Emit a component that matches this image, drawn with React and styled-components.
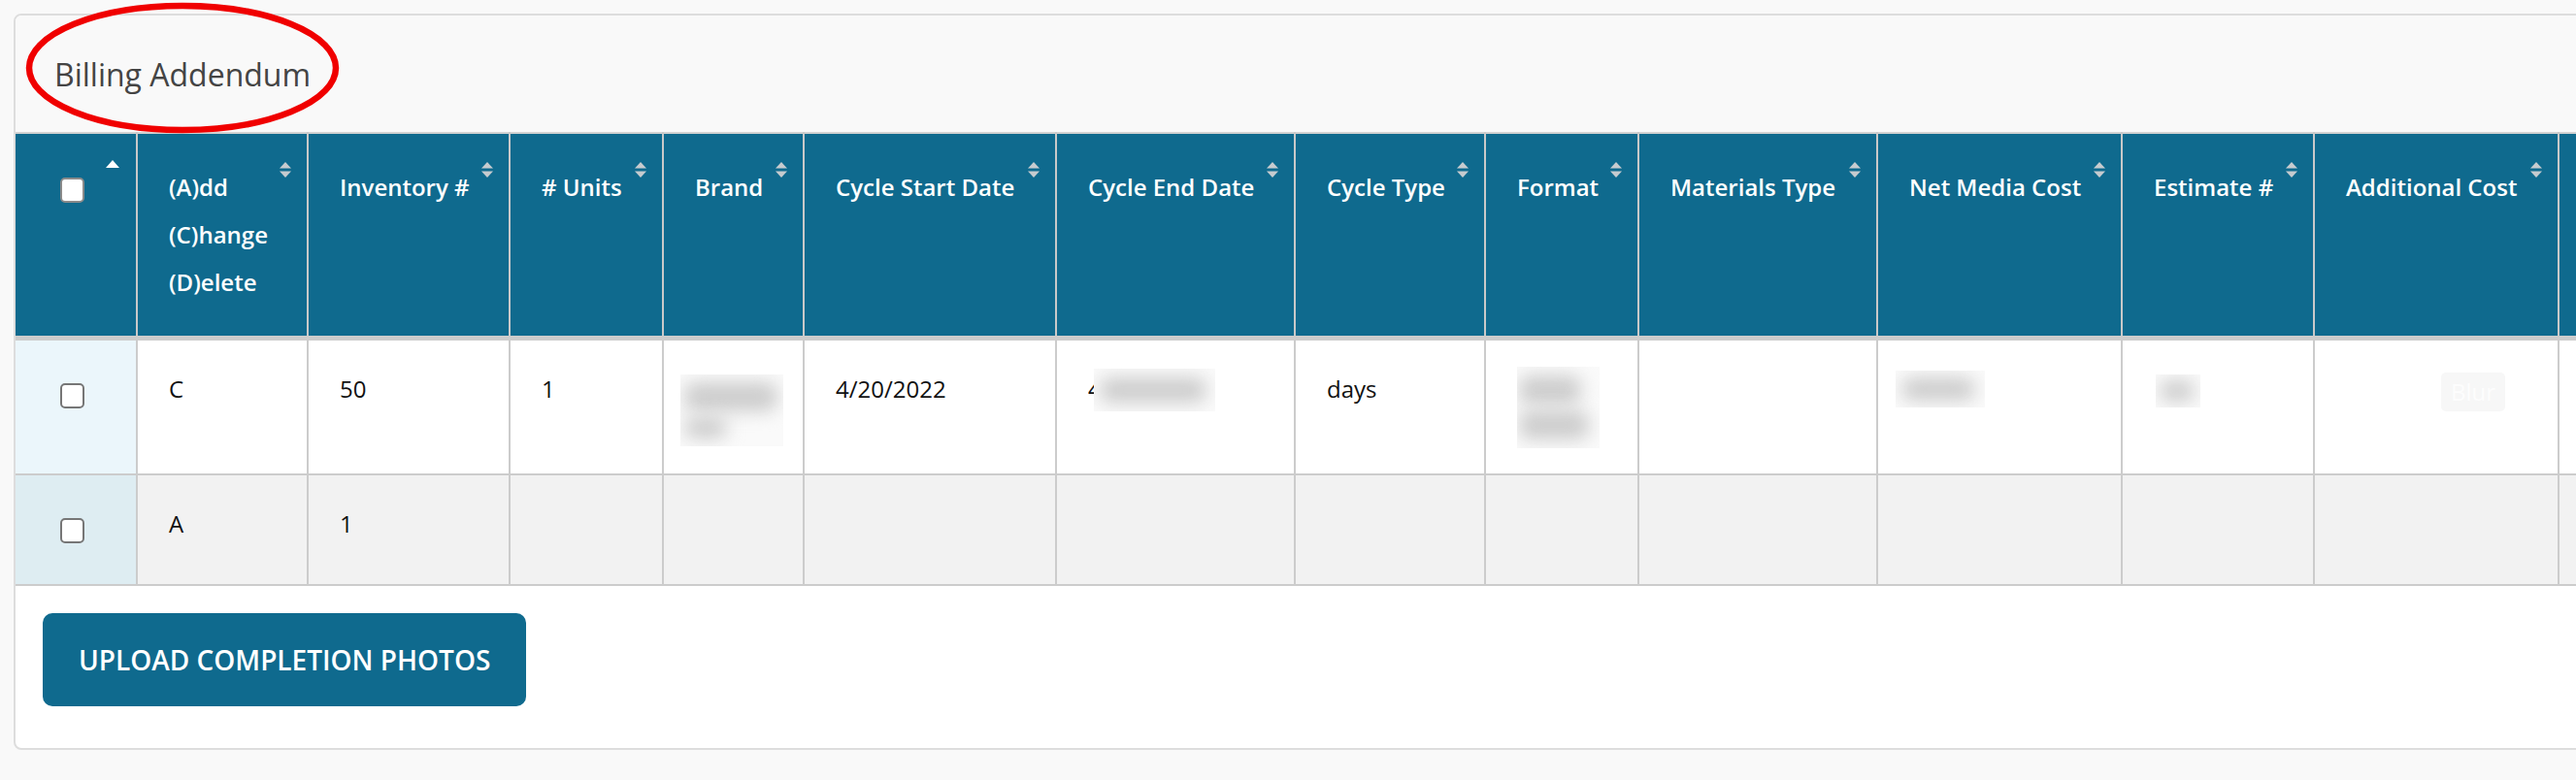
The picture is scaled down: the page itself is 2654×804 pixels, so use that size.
import React from 'react';
import styled, { createGlobalStyle } from 'styled-components';

const GlobalStyle = createGlobalStyle`
  html, body {
    margin: 0;
    background: #f9f9f9;
    overflow: hidden;
  }
  body {
    font-family: "Open Sans", "Noto Sans", sans-serif;
  }
`;

const columns = [
  { w: 125, label: null, sort: 'asc' },
  { w: 176, label: ['(A)dd', '(C)hange', '(D)elete'] },
  { w: 208, label: 'Inventory #' },
  { w: 158, label: '# Units' },
  { w: 145, label: 'Brand' },
  { w: 260, label: 'Cycle Start Date' },
  { w: 246, label: 'Cycle End Date' },
  { w: 196, label: 'Cycle Type' },
  { w: 158, label: 'Format' },
  { w: 246, label: 'Materials Type' },
  { w: 252, label: 'Net Media Cost' },
  { w: 198, label: 'Estimate #' },
  { w: 252, label: 'Additional Cost' },
  { w: 220, label: '', sort: 'none' },
];

const SortIcon = ({ dir }) =>
  dir === 'asc' ? (
    <SortMark $top={26} width="16" height="10" viewBox="0 0 16 10">
      <polygon points="8,1 15,9 1,9" fill="#ffffff" />
    </SortMark>
  ) : (
    <SortMark $top={29} width="12" height="16" viewBox="0 0 12 16">
      <polygon points="6,0 12,6.5 0,6.5" fill="#c6cbcf" />
      <polygon points="0,9.5 12,9.5 6,16" fill="#c6cbcf" />
    </SortMark>
  );

const App = () => {
  return (
    <Page>
      <GlobalStyle />
      <Card>
        <CardHeader>
          <Title>Billing Addendum</Title>
        </CardHeader>
        <Table style={{ width: columns.reduce((s, c) => s + c.w, 0) }}>
          <colgroup>
            {columns.map((c, i) => (
              <col key={i} style={{ width: c.w }} />
            ))}
          </colgroup>
          <thead>
            <tr>
              {columns.map((c, i) => (
                <Th key={i} $first={i === 0}>
                  {i === 0 ? (
                    <Check $header type="checkbox" readOnly />
                  ) : Array.isArray(c.label) ? (
                    c.label.map((l) => <div key={l}>{l}</div>)
                  ) : (
                    c.label
                  )}
                  {c.sort !== 'none' && <SortIcon dir={c.sort} />}
                </Th>
              ))}
            </tr>
          </thead>
          <tbody>
            <Row $h={140}>
              <SelectCell $bg="#ebf6fb">
                <Check type="checkbox" readOnly />
              </SelectCell>
              <Td>C</Td>
              <Td>50</Td>
              <Td>1</Td>
              <Td>
                <Blurred $w={106} $h={74} $mx={-15} $my={3} $pad={4}>
                  <Blob $w={96} $h={30} />
                  <Blob $w={44} $h={22} />
                </Blurred>
              </Td>
              <Td>4/20/2022</Td>
              <Td>
                <Nowrap>
                  4
                  <Blurred $w={125} $h={44} $mx={-8} $my={-3} $pad={6}>
                    <Blob $w={110} $h={26} />
                  </Blurred>
                </Nowrap>
              </Td>
              <Td>days</Td>
              <Td>
                <Blurred $w={85} $h={84} $mx={0} $my={-5} $pad={2}>
                  <Blob $w={64} $h={30} />
                  <Blob $w={72} $h={30} />
                </Blurred>
              </Td>
              <Td />
              <Td>
                <Blurred $w={92} $h={38} $mx={-14} $my={-1} $pad={6}>
                  <Blob $w={76} $h={24} />
                </Blurred>
              </Td>
              <Td>
                <Blurred $w={46} $h={34} $mx={2} $my={3} $pad={4}>
                  <Blob $w={36} $h={22} />
                </Blurred>
              </Td>
              <Td>
                <BlurButton>Blur</BlurButton>
              </Td>
              <Td />
            </Row>
            <Row $h={114}>
              <SelectCell $bg="#deedf2">
                <Check type="checkbox" readOnly />
              </SelectCell>
              <Td $bg="#f2f2f2">A</Td>
              <Td $bg="#f2f2f2">1</Td>
              {Array.from({ length: 11 }).map((_, i) => (
                <Td key={i} $bg="#f2f2f2" />
              ))}
            </Row>
          </tbody>
        </Table>
        <CardFooter>
          <UploadButton>UPLOAD COMPLETION PHOTOS</UploadButton>
        </CardFooter>
      </Card>
      <Annotation width="326" height="138" viewBox="0 0 326 138">
        <ellipse cx="162" cy="68" rx="158" ry="64" fill="none" stroke="#f00000" strokeWidth="6.5" />
      </Annotation>
    </Page>
  );
};

export default App;

const Page = styled.div`
  position: relative;
  height: 804px;
  box-sizing: border-box;
  padding: 14px 0 0 14px;
`;

const Card = styled.div`
  width: 3000px;
  background: #fff;
  border: 2px solid #dddddd;
  border-radius: 8px;
  overflow: hidden;
`;

const CardHeader = styled.div`
  height: 120px;
  background: #f9f9f9;
  display: flex;
  align-items: center;
  padding-left: 40px;
`;

const Title = styled.h3`
  margin: 0;
  font-size: 32px;
  font-weight: 400;
  color: #444;
`;

const Table = styled.table`
  border-collapse: collapse;
  table-layout: fixed;
`;

const Th = styled.th`
  position: relative;
  background: #0f6a8e;
  color: #fff;
  font-size: 24px;
  font-weight: 600;
  line-height: 49px;
  text-align: left;
  vertical-align: top;
  padding: 30px 40px 31px ${(p) => (p.$first ? '46px' : '32px')};
  border-top: 2px solid #d2d2d2;
  border-bottom: 5px solid #cccccc;
  border-left: ${(p) => (p.$first ? '0' : '2px solid #c9c9c9')};
  border-right: 2px solid #c9c9c9;
  white-space: nowrap;
`;

const SortMark = styled.svg`
  position: absolute;
  right: 16px;
  top: ${(p) => p.$top}px;
`;

const Row = styled.tr`
  height: ${(p) => p.$h}px;
`;

const Td = styled.td`
  background: ${(p) => p.$bg || '#fff'};
  color: #111;
  font-size: 24px;
  line-height: 36px;
  padding: 32px;
  vertical-align: top;
  border: 2px solid #cccccc;
  white-space: nowrap;
`;

const SelectCell = styled(Td)`
  border-left: 0;
  padding-left: 46px;
`;

const Check = styled.input`
  appearance: none;
  display: block;
  width: 25px;
  height: 26px;
  margin: ${(p) => (p.$header ? '15px' : '12px')} 0 0 0;
  box-sizing: border-box;
  border: 2px solid ${(p) => (p.$header ? '#8a8a8a' : '#767676')};
  border-radius: 5px;
  background: #fff;
`;

const Nowrap = styled.span`
  display: inline-flex;
  align-items: flex-start;
`;

const Blurred = styled.span`
  display: inline-flex;
  flex-direction: column;
  justify-content: center;
  gap: 6px;
  box-sizing: border-box;
  padding: 0 ${(p) => p.$pad}px;
  vertical-align: top;
  width: ${(p) => p.$w}px;
  height: ${(p) => p.$h}px;
  margin: ${(p) => p.$my}px 0 -60px ${(p) => p.$mx}px;
  background: #fafafa;
  overflow: hidden;
`;

const Blob = styled.span`
  display: block;
  flex-shrink: 0;
  width: ${(p) => p.$w}px;
  height: ${(p) => p.$h}px;
  border-radius: 12px;
  background: #cdcdcd;
  filter: blur(9px);
`;

const BlurButton = styled.span`
  display: inline-flex;
  align-items: center;
  justify-content: center;
  width: 66px;
  height: 40px;
  margin: 1px 0 0 98px;
  background: #f7f7f7;
  border-radius: 5px;
  color: #fdfdfd;
  font-size: 24px;
`;

const CardFooter = styled.div`
  padding: 28px 0 43px 28px;
`;

const UploadButton = styled.button`
  display: block;
  height: 96px;
  padding: 0 37px;
  border: 0;
  border-radius: 10px;
  background: #0f6a8e;
  color: #fff;
  font-family: "Open Sans", "Noto Sans", sans-serif;
  font-size: 28px;
  font-weight: 600;
`;

const Annotation = styled.svg`
  position: absolute;
  left: 26px;
  top: 2px;
  pointer-events: none;
`;
